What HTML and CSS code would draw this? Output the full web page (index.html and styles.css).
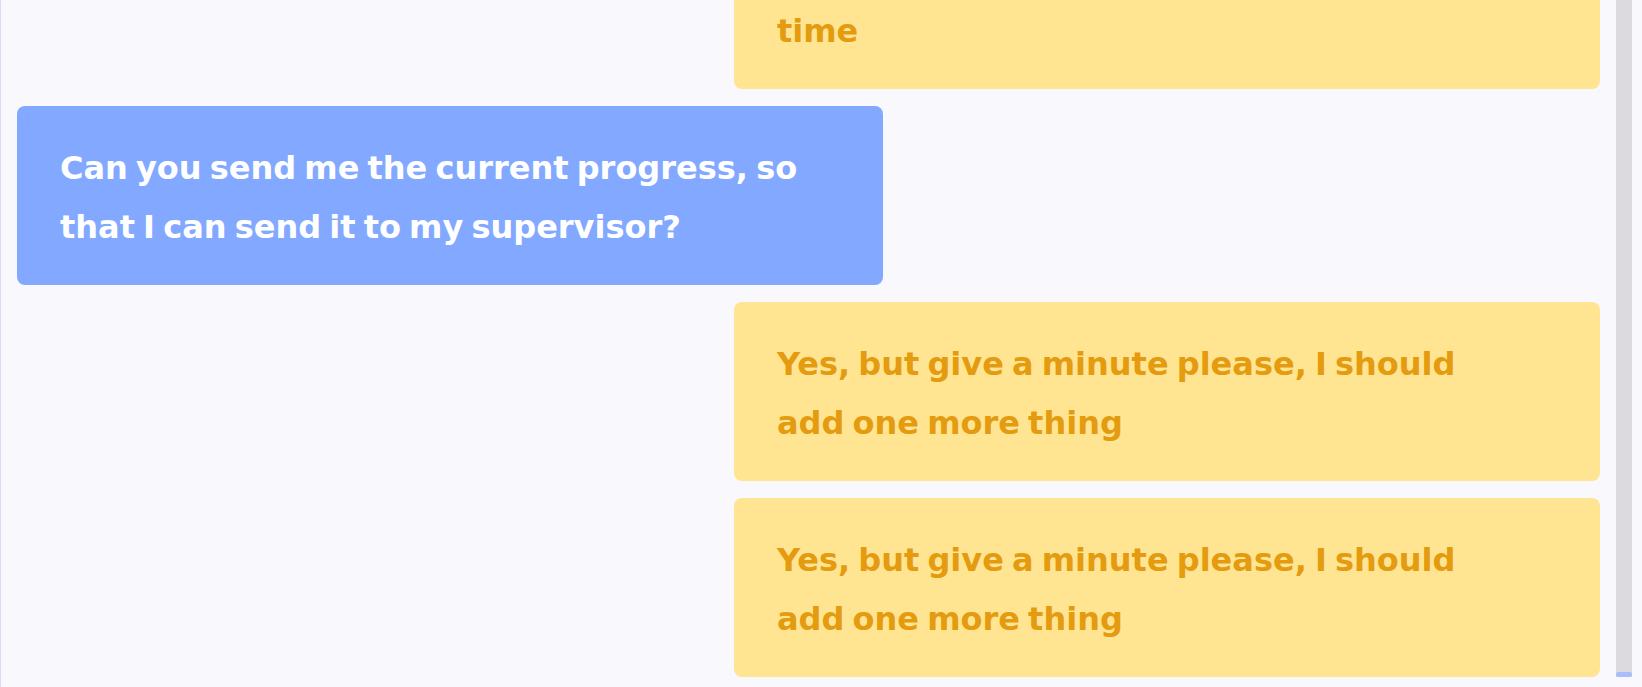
FILE: index.html
```html
<!DOCTYPE html>
<html lang="en">
<head>
    <meta charset="UTF-8">
    <meta name="viewport" content="width=device-width, initial-scale=1.0">
    <title>Chat</title>
    <link rel="stylesheet" href="styles.css">
</head>
<body>
    <div class="chat">
        <div class="messages">
            <div class="message other">
                <p>Sure, I am still working on it, I will send it to you in a short<br>time</p>
            </div>
            <div class="message me">
                <p>Can you send me the current progress, so that I can send it to my supervisor?</p>
            </div>
            <div class="message other">
                <p>Yes, but give a minute please, I should add one more thing</p>
            </div>
            <div class="message other">
                <p>Yes, but give a minute please, I should add one more thing</p>
            </div>
        </div>
        <div class="scrollbar">
            <div class="thumb"></div>
        </div>
    </div>
</body>
</html>
```

FILE: styles.css
```css
body {
    font-family: "DejaVu Sans", Inter, sans-serif;
    margin: 0;
    padding: 0;
    background: #f9f8fc;
}
.chat {
    display: flex;
    height: 687px;
    border-left: 1px solid #d6dbfb;
    box-sizing: border-box;
}
.messages {
    flex: 1;
    display: flex;
    flex-direction: column;
    justify-content: flex-end;
    gap: 17px;
    padding: 0 16px 10px 16px;
    overflow: hidden;
}
.message {
    width: 866px;
    flex-shrink: 0;
    border-radius: 8px;
    padding: 33px 78px 28px 43px;
    box-sizing: border-box;
}
.message p {
    margin: 0;
    font-size: 32px;
    font-weight: 700;
    line-height: 59px;
    word-spacing: -3px;
}
.message.me {
    background: #82a9ff;
    color: #fff;
}
.message.other {
    background: #ffe592;
    color: #e49b0f;
    margin-left: auto;
}
.scrollbar {
    width: 16px;
    margin: 0 10px 10px 0;
    background: #dcdadf;
    display: flex;
    align-items: flex-end;
}
.thumb {
    width: 100%;
    height: 5px;
    border-radius: 3px;
    background: #a9bcfb;
}
```
